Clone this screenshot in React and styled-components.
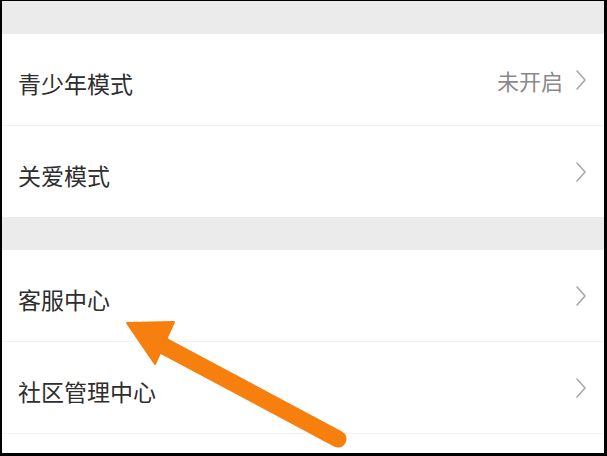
import styled, { createGlobalStyle } from 'styled-components';

const Global = createGlobalStyle`
  html, body {
    margin: 0;
    padding: 0;
    background: #000;
  }
  * {
    box-sizing: border-box;
  }
`;

function Chevron() {
  return (
    <svg width="12" height="22" viewBox="0 0 12 22" fill="none">
      <path d="M2 2 L10 11 L2 20" stroke="#a8a8a8" strokeWidth="1.6" strokeLinecap="round" strokeLinejoin="round" />
    </svg>
  );
}

function Arrow() {
  return (
    <ArrowLayer width="607" height="456" viewBox="0 0 607 456">
      <line x1="160" y1="344" x2="338" y2="439" stroke="#f77f0e" strokeWidth="17" strokeLinecap="round" />
      <polygon points="127,323 174,322 155,364" fill="#f77f0e" strokeLinejoin="round" stroke="#f77f0e" strokeWidth="2" />
    </ArrowLayer>
  );
}

function App() {
  return (
    <>
      <Global />
      <Frame>
        <Gap $h={33} />
        <Row>
          <Label>青少年模式</Label>
          <Right>
            <Status>未开启</Status>
            <Chevron />
          </Right>
        </Row>
        <Row $last>
          <Label>关爱模式</Label>
          <Right><Chevron /></Right>
        </Row>
        <Gap $h={33} />
        <Row>
          <Label>客服中心</Label>
          <Right><Chevron /></Right>
        </Row>
        <Row>
          <Label>社区管理中心</Label>
          <Right><Chevron /></Right>
        </Row>
        <Filler />
        <Arrow />
      </Frame>
    </>
  );
}

const Frame = styled.div`
  position: relative;
  width: 607px;
  height: 456px;
  border-style: solid;
  border-color: #000;
  border-width: 1px 3px 3px 2px;
  background: #fff;
  display: flex;
  flex-direction: column;
  overflow: hidden;
  font-family: "Noto Sans CJK SC", "Noto Sans", sans-serif;
`;

const Gap = styled.div`
  height: ${p => p.$h}px;
  flex: none;
  background: #ebebeb;
`;

const Row = styled.div`
  height: ${p => (p.$last ? 91 : 92)}px;
  flex: none;
  display: flex;
  align-items: center;
  justify-content: space-between;
  padding: 7px 17px 0 16px;
  border-bottom: ${p => (p.$last ? 'none' : '1px solid #f2f2f2')};
`;

const Label = styled.span`
  font-size: 23px;
  color: #2e2e2e;
`;

const Right = styled.div`
  display: flex;
  align-items: center;
  gap: 12px;
  margin-top: -6px;
`;

const Status = styled.span`
  font-size: 22px;
  color: #8a8a8a;
`;

const Filler = styled.div`
  flex: 1;
`;

const ArrowLayer = styled.svg`
  position: absolute;
  left: -2px;
  top: -1px;
  pointer-events: none;
`;

export default App;
